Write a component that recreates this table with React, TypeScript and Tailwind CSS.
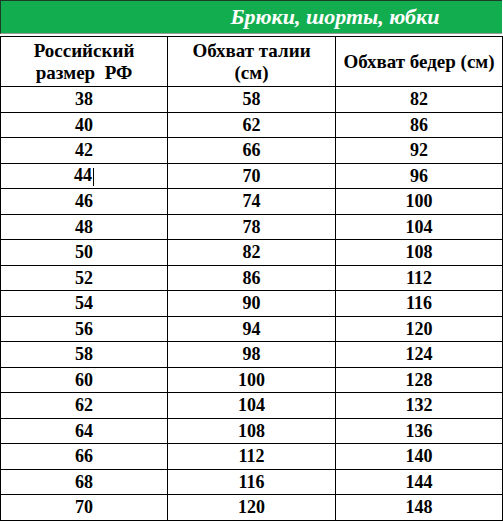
const rows: [number, number, number][] = [
  [38, 58, 82],
  [40, 62, 86],
  [42, 66, 92],
  [44, 70, 96],
  [46, 74, 100],
  [48, 78, 104],
  [50, 82, 108],
  [52, 86, 112],
  [54, 90, 116],
  [56, 94, 120],
  [58, 98, 124],
  [60, 100, 128],
  [62, 104, 132],
  [64, 108, 136],
  [66, 112, 140],
  [68, 116, 144],
  [70, 120, 148],
];

export default function App() {
  return (
    <div className="w-[503px] h-[524px] bg-white overflow-hidden font-['Liberation_Serif'] text-black">
      {/* green title band */}
      <div className="h-[34px] w-[502px] bg-[#12ad4f] border-l border-t border-[#1d3b28] flex border-b border-b-[#9a9a9a]">
        <div className="w-[167px]" />
        <div className="flex-1 flex items-center justify-center text-white font-bold italic text-[22px] leading-none">
          Брюки, шорты, юбки
        </div>
      </div>

      <table className="mt-[2px] w-[502px] border-collapse table-fixed font-bold text-[18px] leading-[20px]">
        <colgroup>
          <col className="w-[167px]" />
          <col className="w-[168px]" />
          <col className="w-[167px]" />
        </colgroup>
        <thead>
          <tr className="h-[50px] text-[19px] leading-[22px]">
            <th className="border border-black text-center align-middle font-bold p-0">
              Российский
              <br />
              размер&nbsp; РФ
            </th>
            <th className="border border-black text-center align-middle font-bold p-0">
              Обхват талии
              <br />
              (см)
            </th>
            <th className="border border-black text-center align-middle font-bold whitespace-nowrap p-0">
              Обхват бедер (см)
            </th>
          </tr>
        </thead>
        <tbody>
          {rows.map(([ru, waist, hip]) => (
            <tr key={ru} className="h-[25.5px]">
              <td className="border border-black text-center align-middle p-0">
                {ru}
                {ru === 44 && <span className="inline-block w-px h-[18px] bg-black align-middle ml-px" />}
              </td>
              <td className="border border-black text-center align-middle p-0">{waist}</td>
              <td className="border border-black text-center align-middle p-0">{hip}</td>
            </tr>
          ))}
        </tbody>
      </table>
    </div>
  );
}
